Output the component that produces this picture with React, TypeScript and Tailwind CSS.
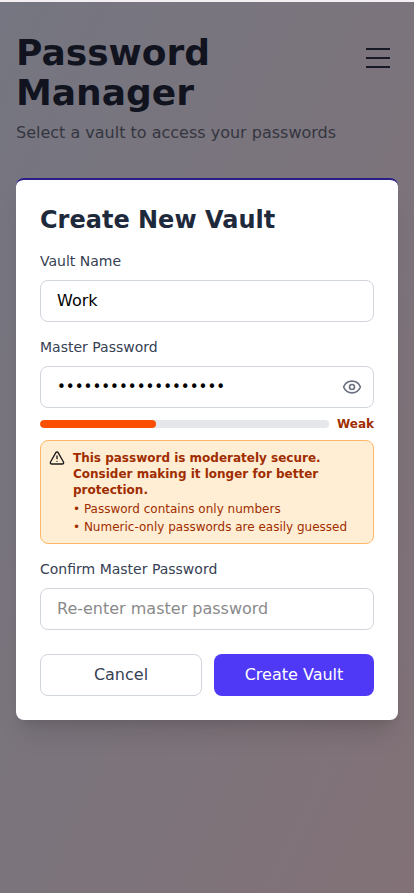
import { Eye, TriangleAlert } from "lucide-react";

const font = "font-['DejaVu_Sans',sans-serif]";

export default function App() {
  return (
    <div className={`${font} min-h-screen flex flex-col bg-[#f4eff3]`}>
      <div className="mt-[2px] flex-1 min-h-[891px] px-4 pt-[31px] bg-gradient-to-br from-[#757681] to-[#827277]">
        <header className="flex items-start justify-between">
          <div>
            <h1 className="w-[220px] text-4xl font-bold text-[#11141f] leading-10">Password Manager</h1>
            <p className="mt-2 text-base leading-6 text-[#34363f]">Select a vault to access your passwords</p>
          </div>
          <button className="mt-[15px] mr-2 w-6 flex flex-col gap-[7px]" aria-label="Menu">
            <span className="block h-[2px] w-6 bg-[#161a26]" />
            <span className="block h-[2px] w-6 bg-[#161a26]" />
            <span className="block h-[2px] w-6 bg-[#161a26]" />
          </button>
        </header>

        <div className="mt-[33px] rounded-lg border-t-2 border-[#2a1d86] bg-white p-6 shadow-xl">
          <h2 className="text-2xl font-bold leading-8 text-[#1e293b] mb-[15px]">Create New Vault</h2>

          <label className="block text-sm leading-5 text-[#364153] mb-[9px]">Vault Name</label>
          <input
            readOnly
            value="Work"
            className="block w-full h-[42px] rounded-lg border border-[#d1d5dc] px-4 pb-[2px] text-base text-black outline-none"
          />

          <label className="block mt-[15px] text-sm leading-5 text-[#364153] mb-[9px]">Master Password</label>
          <div className="relative">
            <input
              readOnly
              type="password"
              value="1234567890123456789"
              className="block w-full h-[42px] rounded-lg border border-[#d1d5dc] px-4 text-[15px] text-black outline-none"
            />
            <Eye size={20} strokeWidth={2} className="absolute right-[2px] top-[11px] mr-[10px] text-[#6a7282]" />
          </div>

          <div className="mt-2 flex items-center gap-2">
            <div className="h-2 flex-1 rounded-full bg-[#e5e7eb] overflow-hidden">
              <div className="h-full w-[40%] rounded-full bg-[#fb4f04]" />
            </div>
            <span className="text-xs leading-4 font-bold text-[#9f2d00]">Weak</span>
          </div>

          <div className="mt-2 flex gap-2 rounded-lg border border-[#ffb86a] bg-[#ffedd4] pt-[9px] pb-[7px] pl-2 pr-3">
            <TriangleAlert size={16} strokeWidth={2} className="mt-0 shrink-0 text-[#1a1a1a]" />
            <div className="min-w-0">
              <p className="text-xs leading-4 font-bold text-[#9f2d00]">
                This password is moderately secure. Consider making it longer for better protection.
              </p>
              <ul className="mt-[2px] text-xs leading-[18px] text-[#9f2d00]">
                <li>• Password contains only numbers</li>
                <li>• Numeric-only passwords are easily guessed</li>
              </ul>
            </div>
          </div>

          <label className="block mt-[15px] text-sm leading-5 text-[#364153] mb-[9px]">Confirm Master Password</label>
          <input
            readOnly
            placeholder="Re-enter master password"
            className="block w-full h-[42px] rounded-lg border border-[#d1d5dc] px-4 pb-[2px] text-base text-black outline-none placeholder:text-[#8a8a8a]"
          />

          <div className="mt-6 flex gap-3">
            <button className="flex-1 h-[42px] rounded-lg border border-[#d1d5dc] bg-white px-4 text-base text-[#364153]">Cancel</button>
            <button className="flex-1 h-[42px] rounded-lg bg-[#4f39f6] px-4 text-base text-white">Create Vault</button>
          </div>
        </div>
      </div>
    </div>
  );
}
